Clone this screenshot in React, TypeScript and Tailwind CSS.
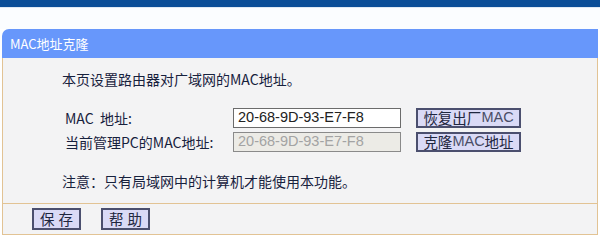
import React from 'react';

const cjk = '"Noto Sans CJK SC", "Liberation Sans", sans-serif';
const arial = '"Liberation Sans", "Noto Sans CJK SC", sans-serif';

function Btn({ children, className = '' }: { children: React.ReactNode; className?: string }) {
  return (
    <button
      type="button"
      className={`flex items-center justify-center border-2 border-[#4b4f6e] bg-[#dadaf6] text-[#1f2740] ${className}`}
    >
      {children}
    </button>
  );
}

export default function App() {
  return (
    <div className="h-[251px] w-[600px] bg-white" style={{ fontFamily: cjk }}>
      <div className="h-[7px] bg-[#0b4e98]" />
      <div className="h-[1px] bg-[#dfe9f5]" />
      <div className="h-[21px] bg-[#fbfdff]" />

      <div className="ml-[2px] w-[596px]">
        <div className="flex h-[29px] items-center rounded-tl-[7px] bg-[#6797fb] pl-[8px] text-[13px] text-white">
          MAC地址克隆
        </div>

        <div className="border-x border-b border-[#e2c394] bg-[#f3f3f4] pb-[12px] pl-[59px] pt-[11px] text-[14px] text-[#17213d]">
          <p className="h-[20px] leading-[20px]">本页设置路由器对广域网的MAC地址。</p>

          <div className="mt-[19px] flex flex-col gap-[4px]">
            <div className="flex h-[20px] items-center">
              <span className="w-[171px] pl-[3px]">MAC&nbsp;&nbsp;地址:</span>
              <input
                readOnly
                value="20-68-9D-93-E7-F8"
                className="h-[20px] w-[168px] border border-[#6b6b6b] bg-white px-[4px] text-[14.5px] text-[#222] outline-none"
                style={{ fontFamily: arial }}
              />
              <Btn className="ml-[15px] h-[20px] w-[105px] text-[14.5px]">
                恢复出厂<span style={{ fontFamily: arial }} className="text-[#4a4e66]">MAC</span>
              </Btn>
            </div>
            <div className="flex h-[20px] items-center">
              <span className="w-[171px] pl-[3px]">当前管理PC的MAC地址:</span>
              <input
                readOnly
                disabled
                value="20-68-9D-93-E7-F8"
                className="h-[20px] w-[168px] border border-[#8a8a8a] bg-[#ecebe6] px-[4px] text-[14.5px] text-[#a3a3a3] outline-none"
                style={{ fontFamily: arial }}
              />
              <Btn className="ml-[15px] h-[20px] w-[105px] text-[14.5px]">
                克隆<span style={{ fontFamily: arial }} className="text-[#4a4e66]">MAC</span>地址
              </Btn>
            </div>
          </div>

          <p className="mt-[19px] h-[20px] leading-[20px]">注意：只有局域网中的计算机才能使用本功能。</p>
        </div>

        <div className="flex h-[31px] items-center gap-[20px] border-x border-b border-[#e2c394] bg-[#f3f3f4] pl-[29px]">
          <Btn className="h-[22px] w-[49px] gap-[4px] text-[14.5px]">
            <span>保</span>
            <span>存</span>
          </Btn>
          <Btn className="h-[22px] w-[49px] gap-[4px] text-[14.5px]">
            <span>帮</span>
            <span>助</span>
          </Btn>
        </div>
      </div>
    </div>
  );
}
